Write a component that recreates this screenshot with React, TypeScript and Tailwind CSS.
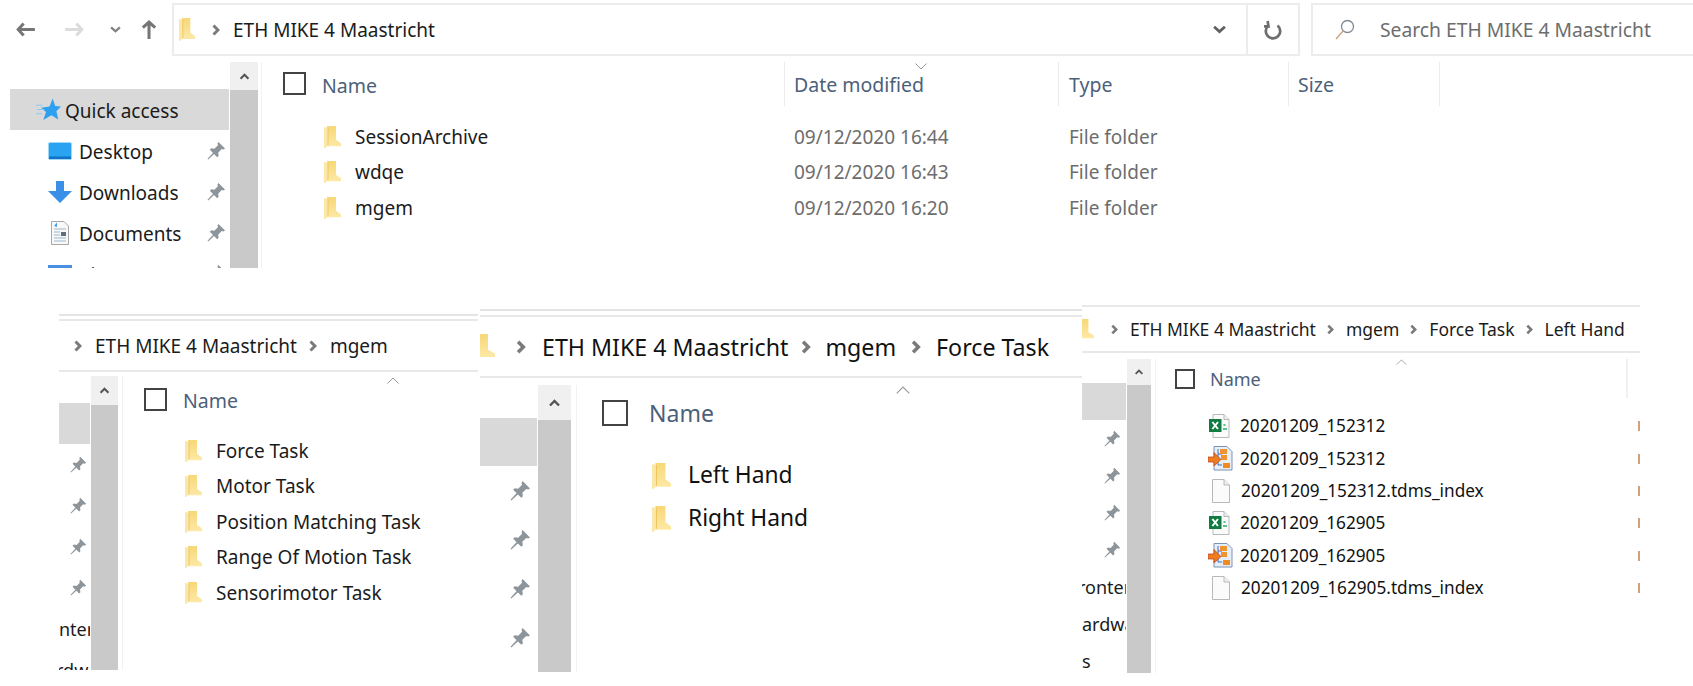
import type { ReactNode } from "react";

function FolderIcon({ className }: { className: string }) {
  return (
    <svg viewBox="0 0 17 24" preserveAspectRatio="none" className={className}>
      <defs>
        <linearGradient id="fold" x1="0" y1="0" x2="0" y2="1">
          <stop offset="0" stopColor="#f7d777" />
          <stop offset="1" stopColor="#fde9a6" />
        </linearGradient>
      </defs>
      <path d="M3 0 H12 V15 L17 19 V22 H3 Z" fill="url(#fold)" />
      <path d="M0 1 L4 2 V21 L1 24 H0 Z" fill="#fbe7a8" />
      <path d="M4 2 V21" stroke="#e8c058" strokeWidth="0.8" />
    </svg>
  );
}

function Crumb({ className }: { className: string }) {
  return (
    <svg viewBox="0 0 8 12" className={className} fill="none" stroke="#7a7a7a" strokeWidth="3">
      <path d="M1.5 1.5 L6 6 L1.5 10.5" />
    </svg>
  );
}

function Pin({ className }: { className: string }) {
  return (
    <svg viewBox="0 0 16 16" className={className} fill="#8d959b">
      <path d="M9.6 0.8 L15.2 6.4 L13.8 7.2 L12.4 6.8 L9.4 9.8 L9.8 12.4 L8.6 13.6 L2.4 7.4 L3.6 6.2 L6.2 6.6 L9.2 3.6 L8.8 2.2 Z" />
      <path d="M5.4 9.6 L6.4 10.6 L1 15.6 L0.4 15 Z" />
    </svg>
  );
}

function ScrollUp({ className }: { className: string }) {
  return (
    <svg viewBox="0 0 12 8" className={className} fill="none" stroke="#555555" strokeWidth="2.4">
      <path d="M1.5 6.5 L6 2 L10.5 6.5" />
    </svg>
  );
}

function SortCaret({ className, down }: { className: string; down?: boolean }) {
  return (
    <svg viewBox="0 0 12 7" className={className} fill="none" stroke="#9a9a9a" strokeWidth="1">
      <path d={down ? "M0.5 0.5 L6 6 L11.5 0.5" : "M0.5 6.5 L6 1 L11.5 6.5"} />
    </svg>
  );
}

function Check({ className }: { className: string }) {
  return <div className={`border-2 border-[#434343] bg-white shrink-0 ${className}`} />;
}

function ExcelIcon() {
  return (
    <svg viewBox="0 0 21 24" className="w-[21px] h-[24px] shrink-0">
      <path d="M4 0.5 H15 L20 5.5 V23.5 H4 Z" fill="#fbfbfb" stroke="#b9b9b9" />
      <path d="M15 0.5 V5.5 H20" fill="#eeeeee" stroke="#b9b9b9" />
      <rect x="0" y="5" width="12.5" height="13" fill="#107c41" />
      <path d="M3.4 8 L9 15 M9 8 L3.4 15" stroke="#ffffff" strokeWidth="2" />
      <path d="M14 15 h4 M14.5 11 h2" stroke="#5cc08f" strokeWidth="1.8" />
    </svg>
  );
}

function TdmsIcon() {
  return (
    <svg viewBox="0 0 25 25" className="w-[25px] h-[25px] shrink-0 -ml-[1px] -mr-[3px]">
      <path d="M6 0.5 H19 L24 5.5 V24 H6 Z" fill="#e6eef8" stroke="#7d93b5" />
      <path d="M10 3 V19 H14 M10 8 H14" stroke="#3b6fc9" strokeWidth="1" fill="none" />
      <rect x="12" y="3" width="7" height="5" fill="#ef9430" />
      <rect x="13" y="9" width="6" height="5" fill="#ef9430" />
      <rect x="15" y="17" width="7" height="5" fill="#ef8a20" />
      <path d="M0 11 L6 11 L6 6.5 L13 13.5 L6 20 L6 16 L0 16 Z" fill="#ee7d1f" stroke="#b7401a" strokeWidth="0.7" />
    </svg>
  );
}

function BlankIcon() {
  return (
    <svg viewBox="0 0 18 24" className="w-[18px] h-[24px] shrink-0 ml-[3px] mr-[1px]">
      <path d="M0.5 0.5 H12 L17.5 6 V23.5 H0.5 Z" fill="#fbfbfb" stroke="#b9b9b9" />
      <path d="M12 0.5 V6 H17.5" fill="#efefef" stroke="#b9b9b9" />
    </svg>
  );
}

function Row({ height, icon, children }: { height: string; icon: ReactNode; children: ReactNode }) {
  return (
    <div className={`flex items-center whitespace-nowrap ${height}`}>
      {icon}
      {children}
    </div>
  );
}

function TopPanel() {
  const rows = [
    ["SessionArchive", "09/12/2020 16:44"],
    ["wdqe", "09/12/2020 16:43"],
    ["mgem", "09/12/2020 16:20"],
  ];
  const nav = [
    {
      label: "Desktop",
      icon: (
        <svg viewBox="0 0 24 18" className="w-[24px] h-[18px]">
          <rect x="0.5" y="0.5" width="23" height="17" rx="1.5" fill="#2aa3f0" stroke="#9fd6f7" />
          <rect x="1" y="14.5" width="22" height="2.5" fill="#1272c4" />
        </svg>
      ),
    },
    {
      label: "Downloads",
      icon: (
        <svg viewBox="0 0 24 22" className="w-[24px] h-[22px]">
          <path d="M8 0 H16 V10 H24 L12 22 L0 10 H8 Z" fill="#3a8fe6" />
        </svg>
      ),
    },
    {
      label: "Documents",
      icon: (
        <svg viewBox="0 0 24 24" className="w-[24px] h-[24px]">
          <path d="M3.5 0.5 H16 L20.5 5 V23.5 H3.5 Z" fill="#f8f8f8" stroke="#a8a8a8" />
          <path d="M6 8 H18 M6 11 H12 M6 14 H12 M6 17 H18 M6 20 H18" stroke="#9cb8cf" strokeWidth="1" />
          <path d="M6 5 L9 1.5 V6 Z" fill="#3f9fe8" />
          <rect x="13" y="11" width="5" height="4" fill="#5b6f80" />
        </svg>
      ),
    },
    {
      label: "Pictures",
      icon: <div className="w-[24px] h-[18px] bg-[#4a90e2]" />,
    },
  ];

  return (
    <section className="absolute left-0 top-0 w-[1693px] h-[268px] overflow-hidden flex flex-col">
      <div className="h-[62px] pt-[3px] flex shrink-0">
        <div className="w-[172px] h-[53px] flex items-center pl-[16px]">
          <svg viewBox="0 0 20 16" className="w-[19px] h-[15px]" fill="none" stroke="#767676" strokeWidth="3.2">
            <path d="M8 1.5 L2.2 8 L8 14.5 M2 8 H20" />
          </svg>
          <svg viewBox="0 0 20 16" className="w-[19px] h-[15px] ml-[30px]" fill="none" stroke="#dcdcdc" strokeWidth="3.2">
            <path d="M12 1.5 L17.8 8 L12 14.5 M18 8 H0" />
          </svg>
          <svg viewBox="0 0 12 8" className="w-[11px] h-[7px] ml-[26px]" fill="none" stroke="#808080" strokeWidth="2.6">
            <path d="M1 1.5 L6 6 L11 1.5" />
          </svg>
          <svg viewBox="0 0 16 20" className="w-[16px] h-[19px] ml-[20px]" fill="none" stroke="#767676" strokeWidth="3.2">
            <path d="M1.5 8 L8 2.2 L14.5 8 M8 2 V20" />
          </svg>
        </div>
        <div className="w-[1128px] h-[53px] border-2 border-[#ececec] flex items-center">
          <FolderIcon className="w-[16px] h-[23px] ml-[5px] shrink-0" />
          <Crumb className="w-[8px] h-[12px] ml-[17px] shrink-0" />
          <span className="ml-[13px] pt-[1px] text-[19px] text-[#1b1b1b] whitespace-nowrap">ETH MIKE 4 Maastricht</span>
          <svg viewBox="0 0 12 8" className="w-[13px] h-[9px] ml-auto mr-[20px]" fill="none" stroke="#606060" strokeWidth="2.6">
            <path d="M1 1.5 L6 6 L11 1.5" />
          </svg>
          <div className="w-[52px] h-full border-l-2 border-[#ececec] flex items-center justify-center">
            <svg viewBox="0 0 20 22" className="w-[18px] h-[20px]" fill="none" stroke="#6e6e6e" strokeWidth="3">
              <path d="M5 6 A8 8 0 1 0 15 6" />
              <path d="M4 1 L5 7 L-0.5 7" />
            </svg>
          </div>
        </div>
        <div className="w-[382px] h-[53px] ml-[11px] border-2 border-r-0 border-[#ececec] flex items-center text-[#6d6d6d]">
          <svg viewBox="0 0 20 22" className="w-[20px] h-[22px] ml-[22px] shrink-0" fill="none" strokeWidth="1.3">
            <circle cx="12.5" cy="7.5" r="6" stroke="#7f8b96" />
            <path d="M8 12 L1 20" stroke="#c9a27a" />
          </svg>
          <span className="ml-[25px] pt-[1px] text-[19.3px] whitespace-nowrap">Search ETH MIKE 4 Maastricht</span>
        </div>
      </div>

      <div className="flex flex-1 pl-[10px] min-h-0">
        <div className="w-[219px] pt-[27px] text-[19px] text-[#1b1b1b] shrink-0">
          <div className="h-[41px] bg-[#d9d9d9] flex items-center pl-[26px] gap-[4px]">
            <svg viewBox="0 0 24 22" className="w-[25px] h-[23px]">
              <path d="M16 0.5 L18.4 7.6 L24 8 L19.6 12.6 L21.4 20.5 L14.8 16.4 L7 21 L9.6 13.4 L5 9.4 L13 8 Z" fill="#2f9ff0" />
              <path d="M0 7 H6 M1 11 H8 M0 15 H6" stroke="#8cc9f5" strokeWidth="1" />
            </svg>
            <span className="pt-[3px]">Quick access</span>
          </div>
          {nav.map((n) => (
            <div key={n.label} className="h-[41px] flex items-center pl-[38px]">
              <div className="w-[24px] flex justify-center shrink-0">{n.icon}</div>
              <span className="ml-[7px] pt-[3px]">{n.label}</span>
              <Pin className="w-[19px] h-[19px] ml-auto mr-[3px]" />
            </div>
          ))}
        </div>
        <div className="w-[28px] ml-[1px] flex flex-col shrink-0">
          <div className="h-[28px] bg-[#f0f0f0] flex items-center justify-center">
            <ScrollUp className="w-[11px] h-[7px]" />
          </div>
          <div className="flex-1 bg-[#c9c9c9]" />
        </div>
        <div className="w-[1px] ml-[3px] bg-[#f2f2f2] shrink-0" />
        <div className="flex-1 relative">
          <div className="grid grid-cols-[523px_274px_230px_151px] h-[44px] text-[19.5px] text-[#4c607a]">
            <div className="flex items-center pl-[21px] border-r border-[#ececec]">
              <Check className="w-[23px] h-[23px] -mt-[2px]" />
              <span className="ml-[16px] pt-[3px]">Name</span>
            </div>
            <div className="flex items-center pl-[9px] pt-[2px] border-r border-[#ececec]">Date modified</div>
            <div className="flex items-center pl-[10px] pt-[2px] border-r border-[#ececec]">Type</div>
            <div className="flex items-center pl-[9px] pt-[2px] border-r border-[#ececec]">Size</div>
          </div>
          <SortCaret down className="absolute left-[653px] top-[1px] w-[12px] h-[7px]" />
          <div className="pt-[13px]">
            {rows.map(([name, date]) => (
              <div key={name} className="grid grid-cols-[523px_274px_230px_151px] h-[35.5px] items-center text-[19px]">
                <Row height="h-[35.5px]" icon={<FolderIcon className="w-[17px] h-[22px] ml-[62px] mr-[14px] shrink-0" />}>
                  <span className="text-[#1b1b1b]">{name}</span>
                </Row>
                <span className="pl-[9px] text-[#6d6d6d]">{date}</span>
                <span className="pl-[10px] text-[#6d6d6d]">File folder</span>
                <span />
              </div>
            ))}
          </div>
        </div>
      </div>
    </section>
  );
}

function MgemPanel() {
  const rows = ["Force Task", "Motor Task", "Position Matching Task", "Range Of Motion Task", "Sensorimotor Task"];
  return (
    <section className="absolute left-[59px] top-[314px] w-[419px] h-[356px] overflow-hidden flex flex-col border-t-2 border-[#e4e4e4]">
      <div className="mt-[3px] h-[53px] border-t-2 border-b-2 border-[#e8e8e8] flex items-center shrink-0 text-[19px] text-[#1b1b1b] whitespace-nowrap">
        <Crumb className="w-[8px] h-[12px] ml-[15px] shrink-0" />
        <span className="ml-[13px] pt-[2px]">ETH MIKE 4 Maastricht</span>
        <Crumb className="w-[8px] h-[12px] ml-[12px] shrink-0" />
        <span className="ml-[13px] pt-[2px]">mgem</span>
      </div>
      <div className="flex flex-1 pt-[4px] min-h-0">
        <div className="w-[31px] pt-[27px] text-[18px] text-[#1b1b1b] shrink-0 overflow-hidden">
          <div className="h-[41px] bg-[#d9d9d9]" />
          {[0, 1, 2, 3].map((i) => (
            <div key={i} className="h-[41px] flex items-center pl-[11px]">
              <Pin className="w-[17px] h-[17px]" />
            </div>
          ))}
          <div className="h-[41px] flex items-center pt-[2px] whitespace-nowrap">nter</div>
          <div className="h-[41px] flex items-center pt-[2px] whitespace-nowrap -ml-[3px]">rdwa</div>
        </div>
        <div className="w-[27px] ml-[1px] flex flex-col shrink-0">
          <div className="h-[29px] bg-[#f0f0f0] flex items-center justify-center">
            <ScrollUp className="w-[11px] h-[7px]" />
          </div>
          <div className="flex-1 bg-[#c9c9c9]" />
        </div>
        <div className="w-[1px] ml-[4px] bg-[#f2f2f2] shrink-0" />
        <div className="flex-1 relative">
          <div className="h-[46px] flex items-center pl-[21px]">
            <Check className="w-[23px] h-[23px]" />
            <span className="ml-[16px] pt-[3px] text-[19.5px] text-[#4c607a]">Name</span>
          </div>
          <SortCaret className="absolute left-[264px] top-[1px] w-[12px] h-[7px]" />
          <div className="pt-[11px] pl-[62px] text-[19px] text-[#1b1b1b]">
            {rows.map((r) => (
              <Row key={r} height="h-[35.5px]" icon={<FolderIcon className="w-[17px] h-[22px] mr-[14px] shrink-0" />}>
                {r}
              </Row>
            ))}
          </div>
        </div>
      </div>
    </section>
  );
}

function ForcePanel() {
  return (
    <section className="absolute left-[480px] top-[309px] w-[602px] h-[363px] overflow-hidden flex flex-col border-t-2 border-[#e4e4e4]">
      <div className="mt-[4px] h-[63px] border-t-2 border-b-2 border-[#e8e8e8] flex items-center shrink-0 text-[23.2px] text-[#111111] whitespace-nowrap">
        <FolderIcon className="w-[24px] h-[25px] -ml-[9px] shrink-0" />
        <Crumb className="w-[10px] h-[14px] ml-[21px] shrink-0" />
        <span className="ml-[16px] pt-[2px]">ETH MIKE 4 Maastricht</span>
        <Crumb className="w-[10px] h-[14px] ml-[13px] shrink-0" />
        <span className="ml-[14px] pt-[2px]">mgem</span>
        <Crumb className="w-[10px] h-[14px] ml-[15px] shrink-0" />
        <span className="ml-[15px] pt-[2px]">Force Task</span>
      </div>
      <div className="flex flex-1 pt-[7px] min-h-0">
        <div className="w-[57px] pt-[33px] shrink-0">
          <div className="h-[48px] bg-[#d9d9d9]" />
          {[0, 1, 2, 3].map((i) => (
            <div key={i} className="h-[49px] flex items-center pl-[30px]">
              <Pin className="w-[21px] h-[21px]" />
            </div>
          ))}
        </div>
        <div className="w-[33px] ml-[1px] flex flex-col shrink-0">
          <div className="h-[35px] bg-[#f0f0f0] flex items-center justify-center">
            <ScrollUp className="w-[13px] h-[8px]" />
          </div>
          <div className="flex-1 bg-[#c9c9c9]" />
        </div>
        <div className="w-[1px] ml-[5px] bg-[#f2f2f2] shrink-0" />
        <div className="flex-1 relative">
          <div className="h-[55px] flex items-center pl-[25px]">
            <Check className="w-[26px] h-[26px]" />
            <span className="ml-[21px] pt-[1px] text-[23px] text-[#4c607a]">Name</span>
          </div>
          <SortCaret className="absolute left-[319px] top-[1px] w-[14px] h-[8px]" />
          <div className="pt-[14px] pl-[75px] text-[22.8px] text-[#111111]">
            {["Left Hand", "Right Hand"].map((r) => (
              <Row key={r} height="h-[43px]" icon={<FolderIcon className="w-[19px] h-[26px] mr-[17px] shrink-0" />}>
                {r}
              </Row>
            ))}
          </div>
        </div>
      </div>
    </section>
  );
}

function LeftHandPanel() {
  const files = [
    { name: "20201209_152312", icon: <ExcelIcon /> },
    { name: "20201209_152312", icon: <TdmsIcon /> },
    { name: "20201209_152312.tdms_index", icon: <BlankIcon /> },
    { name: "20201209_162905", icon: <ExcelIcon /> },
    { name: "20201209_162905", icon: <TdmsIcon /> },
    { name: "20201209_162905.tdms_index", icon: <BlankIcon /> },
  ];
  return (
    <section className="absolute left-[1082px] top-[305px] w-[558px] h-[368px] overflow-hidden flex flex-col">
      <div className="h-[48px] border-t-2 border-b-2 border-[#e8e8e8] flex items-center shrink-0 text-[17.5px] text-[#1b1b1b] whitespace-nowrap">
        <FolderIcon className="w-[19px] h-[21px] -ml-[7px] shrink-0" />
        <Crumb className="w-[7px] h-[11px] ml-[17px] shrink-0" />
        <span className="ml-[12px]">ETH MIKE 4 Maastricht</span>
        <Crumb className="w-[7px] h-[11px] ml-[11px] shrink-0" />
        <span className="ml-[12px]">mgem</span>
        <Crumb className="w-[7px] h-[11px] ml-[11px] shrink-0" />
        <span className="ml-[12px]">Force Task</span>
        <Crumb className="w-[7px] h-[11px] ml-[11px] shrink-0" />
        <span className="ml-[12px]">Left Hand</span>
      </div>
      <div className="flex flex-1 pt-[6px] min-h-0">
        <div className="w-[44px] pt-[24px] text-[18px] text-[#1b1b1b] shrink-0 overflow-hidden whitespace-nowrap">
          <div className="h-[37px] bg-[#d9d9d9]" />
          {[0, 1, 2, 3].map((i) => (
            <div key={i} className="h-[37px] flex items-center pl-[22px]">
              <Pin className="w-[17px] h-[17px]" />
            </div>
          ))}
          <div className="h-[37px] flex items-center pt-[2px] -ml-[4px]">ronter</div>
          <div className="h-[37px] flex items-center pt-[2px]">ardwa</div>
          <div className="h-[37px] flex items-center pt-[2px]">s</div>
        </div>
        <div className="w-[24px] ml-[1px] flex flex-col shrink-0">
          <div className="h-[26px] bg-[#f0f0f0] flex items-center justify-center">
            <ScrollUp className="w-[10px] h-[6px]" />
          </div>
          <div className="flex-1 bg-[#c9c9c9]" />
        </div>
        <div className="w-[1px] ml-[4px] bg-[#f2f2f2] shrink-0" />
        <div className="flex-1 relative">
          <div className="flex items-start">
            <div className="w-[472px] h-[39px] flex items-center pl-[19px] border-r-2 border-[#f0f0f0]">
              <Check className="w-[20px] h-[20px]" />
              <span className="ml-[15px] pt-[1px] text-[18px] text-[#4c607a]">Name</span>
            </div>
          </div>
          <SortCaret className="absolute left-[240px] top-[0px] w-[11px] h-[6px]" />
          <div className="pt-[12px] pl-[53px] text-[17.2px] text-[#111111]">
            {files.map((f, i) => (
              <div key={i} className="flex items-center h-[32.4px] whitespace-nowrap">
                {f.icon}
                <span className="ml-[10px]">{f.name}</span>
                <span className="ml-auto w-[2px] h-[10px] bg-[#d3a27c]" />
              </div>
            ))}
          </div>
        </div>
      </div>
    </section>
  );
}

export default function App() {
  return (
    <div className="relative w-[1693px] h-[686px] overflow-hidden bg-white font-['Noto_Sans',sans-serif]">
      <TopPanel />
      <MgemPanel />
      <ForcePanel />
      <LeftHandPanel />
    </div>
  );
}
